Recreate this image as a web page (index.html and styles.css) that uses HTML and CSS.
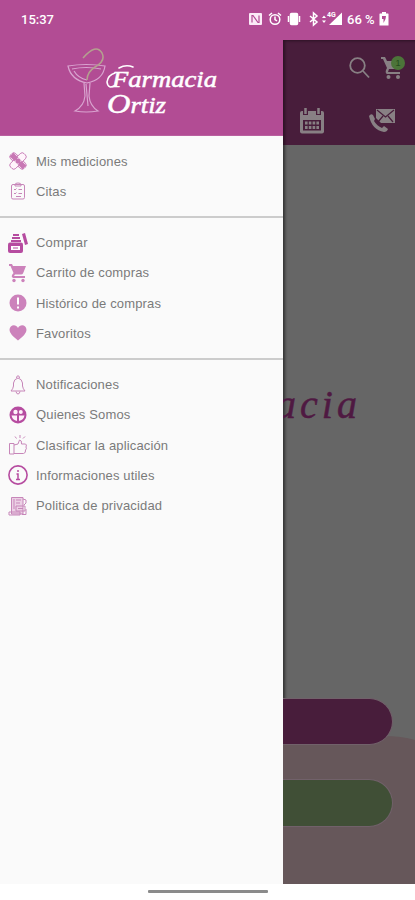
FILE: index.html
```html
<!DOCTYPE html>
<html lang="es">
<head>
<meta charset="utf-8">
<title>Farmacia Ortiz</title>
<link rel="stylesheet" href="styles.css">
</head>
<body>
<div class="phone">
  <header class="status">
    <span class="time">15:37</span>
    <div class="indicators">
      <svg width="94" height="16" viewBox="0 0 94 16" fill="none" stroke="#fff" stroke-width="1.5">
        <rect x="0" y="2" width="13" height="12" rx="1" fill="#fbeaf7" stroke="none"/>
        <path d="M3 11.500V4.500H4L9 11.500H10V4.500" stroke="#b24c94" stroke-width="1.200"/>
        <circle cx="26" cy="8.500" r="4.800"/><path d="M26 5.500V8.500L28 10M20 4.500L23 2M32 4.500L29 2"/>
        <rect x="41.500" y="2.500" width="7" height="11" rx="1" fill="#fff"/><path d="M39.500 5V11M50.500 5V11"/>
        <path d="M61 5L68 11L64.500 14V2L68 5L61 11"/>
        <path d="M73 7L75 4.500L77 7ZM73 9.500L75 12L77 9.500Z" fill="#fff" stroke="none"/>
        <path d="M80 14L93 1.500V14Z" fill="#fff" stroke="none"/>
      </svg>
      <span class="network">4G</span>
      <span class="battery">66 %</span>
      <svg width="10" height="16" viewBox="0 0 10 16"><path d="M3 1H7V2.500H9Q9.500 2.500 9.500 3V14.500H.5V3Q.5 2.500 1 2.500H3Z" fill="#fff"/><path d="M3 5H7L6.500 8L4.500 12V8H3Z" fill="#b24c94"/></svg>
    </div>
  </header>

  <div class="stage">
    <aside class="drawer">
      <div class="brand">
        <svg width="164" height="76" viewBox="0 0 164 76">
          <g fill="none" stroke="#d9a4d0" stroke-width="1.200">
            <path d="M2 18Q20 15 39 18Q37 32 21 35Q5 32 2 18ZM6 21Q20 18 35 21M8 23Q12 30 21 32M18 35L19 48Q18 58 9 63Q20 65 32 63Q24 58 23 48L24 35M20 36L22 58"/>
          </g>
          <path d="M17 10Q30-5 36 5Q40 13 29 19Q21 24 21 32" fill="none" stroke="#b4a18f" stroke-width="1.500"/>
          <path d="M53 20Q60 16 67 19M50 37Q42 42 41 34Q42 27 49 25" fill="none" stroke="#fff" stroke-width="1.600" stroke-linecap="round"/>
          <text class="wordmark" x="46" y="39" textLength="105" lengthAdjust="spacingAndGlyphs">Farmacia</text>
          <text class="wordmark" x="41" y="65" textLength="59" lengthAdjust="spacingAndGlyphs"><tspan class="initial">O</tspan>rtiz</text>
        </svg>
      </div>
      <nav class="menu">
        <ul class="group">
          <li><svg class="icon" viewBox="-1 -1 22 22"><g stroke="#c678b5" stroke-width="1"><rect x="-.5" y="6" width="21" height="8" rx="3" transform="rotate(45 10 10)" fill="#fff4fb"/><rect x="-.5" y="6" width="21" height="8" rx="3" transform="rotate(-45 10 10)" fill="#fff4fb"/></g><path d="M1 5L5 1L19 15L15 19Z" fill="#c877b4"/><path d="M10 7V7.100M7 10H7.100M13 10H13.100M10 13V13.100" stroke="#fff" stroke-width="1.300" stroke-linecap="round"/></svg>Mis mediciones</li>
          <li><svg class="icon line" viewBox="0 0 20 20"><rect x="3.500" y="3.500" width="13" height="14.500" rx="1.500"/><path d="M7 3.500Q7 2 10 2Q13 2 13 3.500V5H7ZM6 8L7 9L8.500 7.500M10.500 8.500H14M6 12L7 13L8.500 11.500M10.500 12.500H14M8 15.500H13"/></svg>Citas</li>
        </ul>
        <ul class="group">
          <li><svg class="icon" viewBox="0 0 20 20" fill="#b64ca0"><path d="M14 1L17 0L20 11L17 12ZM5 1H11V3H5ZM4 4H12V6H4ZM3 7H13V9H3Z"/><rect x="0" y="9.500" width="15" height="10.500" rx="2"/><rect x="3" y="13" width="9" height="4" fill="#fff"/><path d="M5 15H10" stroke="#b64ca0"/></svg>Comprar</li>
          <li><svg class="icon soft" viewBox="0 0 20 20"><path d="M1 1H4L5 3H18L15 10.500Q14.500 11.500 13 11.500H7L6 13H17V15H5Q3 14 4 12L5.500 10L2.500 3H1Z"/><circle cx="6" cy="17.500" r="1.700"/><circle cx="15" cy="17.500" r="1.700"/></svg>Carrito de compras</li>
          <li><svg class="icon soft" viewBox="0 0 20 20"><circle cx="10" cy="10" r="8.500"/><path d="M10 4.500V11.500M10 13.500V15.500" stroke="#fff" stroke-width="2"/></svg>Histórico de compras</li>
          <li><svg class="icon soft" viewBox="0 0 20 20"><path d="M10 17.500Q1.500 11 1.500 7C1.500 1.500 8 .5 10 5C12 .5 18.500 1.500 18.500 7Q18.500 11 10 17.500Z"/></svg>Favoritos</li>
        </ul>
        <ul class="group">
          <li><svg class="icon line" viewBox="0 0 20 20"><path d="M3 16H17Q15 14 14.500 11V8Q14 4 10 3Q6 4 5.500 8V11Q5 14 3 16ZM8.500 3Q8.500 .8 10 .8Q11.500 .8 11.500 3M8 16.500Q8.500 19 10 19Q11.500 19 12 16.500"/></svg>Notificaciones</li>
          <li><svg class="icon" viewBox="0 0 20 20"><circle cx="10" cy="10" r="8.500" fill="#b64ca0"/><g fill="#fff0fa"><circle cx="7.500" cy="7" r="2.200"/><circle cx="12.800" cy="7" r="2"/><path d="M3.500 10.500H9V16Q4.500 15 3.500 10.500ZM11 10.500H16.500Q15.500 15 11 16Z"/></g></svg>Quienes Somos</li>
          <li><svg class="icon line" viewBox="0 0 20 20"><path d="M1.500 8.500H6V19H1.500ZM6 10L10 9L11.500 5Q14 5 13.500 9H17.500Q19 9.500 18 12Q19 14 17.500 15Q18 18 15.500 18.500H6M12 3V0M8.500 3.500L7 1.500M15 3.500L17 1.500"/></svg>Clasificar la aplicación</li>
          <li><svg class="icon" viewBox="0 0 20 20" fill="none" stroke="#b64ca0" stroke-width="1.600"><circle cx="10" cy="10" r="9.100"/><path d="M10 5V7M8.500 9H10V14.500M8 14.500H12" stroke-width="1.500"/></svg>Informaciones utiles</li>
          <li><svg class="icon line" viewBox="0 0 20 20"><path fill="#ecd0e5" d="M3.500 1.500H15V18H3.500Z"/><path d="M1 16H12V19H1ZM15 3L18 4V7L16 9M6 3V13M8 4H13M8 7H12M8 10H17V15H8ZM10 12.500H15M14 18.500H18V13"/></svg>Politica de privacidad</li>
        </ul>
      </nav>
    </aside>

    <main class="page">
      <div class="toolbar">
        <div class="tools">
          <svg width="21" height="22" viewBox="0 0 21 22" fill="none" stroke="#888084" stroke-width="1.800"><circle cx="8.500" cy="8.500" r="7.300"/><path d="M14 14L20 20.500"/></svg>
          <div class="cart">
            <svg width="22" height="23" viewBox="0 0 22 23" fill="#888084"><path d="M0 0H4L6 4H20L16 12H8L7 15H19V17H6Q4 16 5 13L6 11L2 2H0Z"/><circle cx="7.500" cy="20" r="2"/><circle cx="17" cy="20" r="2"/></svg>
            <span class="badge">1</span>
          </div>
        </div>
        <div class="shortcuts">
          <svg width="26" height="26" viewBox="0 0 26 26"><rect x="1" y="3" width="24" height="22.500" rx="2" fill="#888084"/><path d="M4 12H22V22.500H4Z" fill="#481d3b"/><path d="M6.500 2V7M19.500 2V7" stroke="#481d3b" stroke-width="5"/><path d="M6.500 0V6M19.500 0V6" stroke="#888084" stroke-width="2.500"/><path d="M6 15H20M6 19.500H20" stroke="#888084" stroke-width="3" stroke-dasharray="2.600 1.200"/></svg>
          <svg width="26" height="25" viewBox="0 0 26 25"><path d="M7 1H26V15H12L7 10Z" fill="#888084"/><path d="M8 2L16.500 9L25 2M9 14L14 8M24 14L19 8" fill="none" stroke="#481d3b" stroke-width="1.200"/><path d="M0 8Q2 5 4 7L6 11L5 13Q8 18 13 20L15 18L19 21Q18 24 15 24Q3 22 0 8Z" fill="#888084"/></svg>
        </div>
      </div>
      <div class="hero"><svg width="132" height="60" viewBox="0 0 132 60"><text class="hero-name" x="-7" y="40" textLength="81" lengthAdjust="spacing">acia</text></svg></div>
      <div class="actions">
        <svg class="wave" viewBox="0 0 132 150" preserveAspectRatio="none"><path d="M0 9Q65-2 100 0Q119 0 132 4V150H0Z" fill="#66575a"/></svg>
        <div class="pill primary"></div>
        <div class="pill secondary"></div>
      </div>
    </main>
  </div>
  <footer class="gesture"><span class="handle"></span></footer>
</div>
</body>
</html>
```
FILE: styles.css
```css
* { box-sizing: border-box; }
body { margin: 0; background: #fff; font-family: "Liberation Sans", Arial, sans-serif; }
svg { display: block; flex: none; }
.phone { width: 415px; height: 900px; display: flex; flex-direction: column; overflow: hidden; }

.status { height: 40px; flex: none; display: flex; justify-content: space-between; align-items: center; padding: 0 26px 2px 21px; background: #b24c94; color: #fff; font-family: Roboto, sans-serif; font-size: 13px; font-weight: 500; }
.indicators { display: flex; align-items: center; position: relative; width: 140px; }
.network { position: absolute; left: 78px; top: 0; font-size: 7px; font-weight: 700; line-height: 8px; }
.battery { width: 31px; margin: 0 1px 0 4px; font-size: 13px; white-space: nowrap; }

.stage { height: 844px; flex: none; display: flex; }
.drawer { width: 283px; flex: none; background: #fafafa; }
.brand { height: 96px; background: #b24c94; padding: 8px 0 0 66px; border-bottom: 1px solid #b9609f; }
.wordmark { font-family: "Liberation Serif", serif; font-style: italic; font-weight: 400; font-size: 23px; fill: #fff; stroke: #fff; stroke-width: .5px; }
.initial { font-size: 28px; }

.group { list-style: none; margin: 0; padding: 10px 8px 9px; border-bottom: 2px solid #ccc; }
.group:last-child { border-bottom: 0; }
.group li { height: 30.25px; display: flex; align-items: center; gap: 8px; color: #7a7a7a; font-size: 13px; letter-spacing: .15px; white-space: nowrap; }
.icon { width: 20px; height: 20px; }
.line { fill: none; stroke: #c786b9; stroke-width: 1; }
.soft { fill: #cc82bb; }

.page { flex: 1; min-width: 0; display: flex; flex-direction: column; overflow: hidden; background: #666; box-shadow: inset 3px 0 3px -1px rgba(0, 0, 0, .5); }
.toolbar { height: 105px; flex: none; background: #481d3b; padding: 17px 11px 0 17px; box-shadow: inset 3px 2px 3px -1px rgba(0, 0, 0, .4); }
.tools { display: flex; justify-content: flex-end; gap: 11px; height: 51px; }
.cart { position: relative; width: 23px; height: 23px; }
.badge { position: absolute; right: -1px; top: -1px; width: 14px; height: 14px; border-radius: 50%; background: #4c7439; color: #254b1b; font-size: 9px; line-height: 14px; text-align: center; }
.shortcuts { display: flex; justify-content: space-between; padding-right: 9px; margin-left: -1px; }
.hero { height: 553px; flex: none; padding-top: 233px; }
.hero-name { font-family: "Liberation Serif", serif; font-style: italic; font-size: 40px; fill: #4f1942; stroke: #4f1942; stroke-width: .5px; }
.actions { flex: 1; position: relative; padding-right: 22px; }
.wave { position: absolute; left: 0; top: 38px; width: 100%; height: 148px; }
.pill { position: relative; height: 47px; border: 1px solid #71616a; border-left: 0; border-radius: 0 24px 24px 0; }
.primary { background: #481d3b; }
.secondary { margin-top: 34px; height: 48px; background: #404f36; }

.gesture { flex: 1; display: flex; justify-content: center; padding-top: 6px; }
.handle { width: 120px; height: 3px; border-radius: 1px; background: #8b8b8b; }
```
